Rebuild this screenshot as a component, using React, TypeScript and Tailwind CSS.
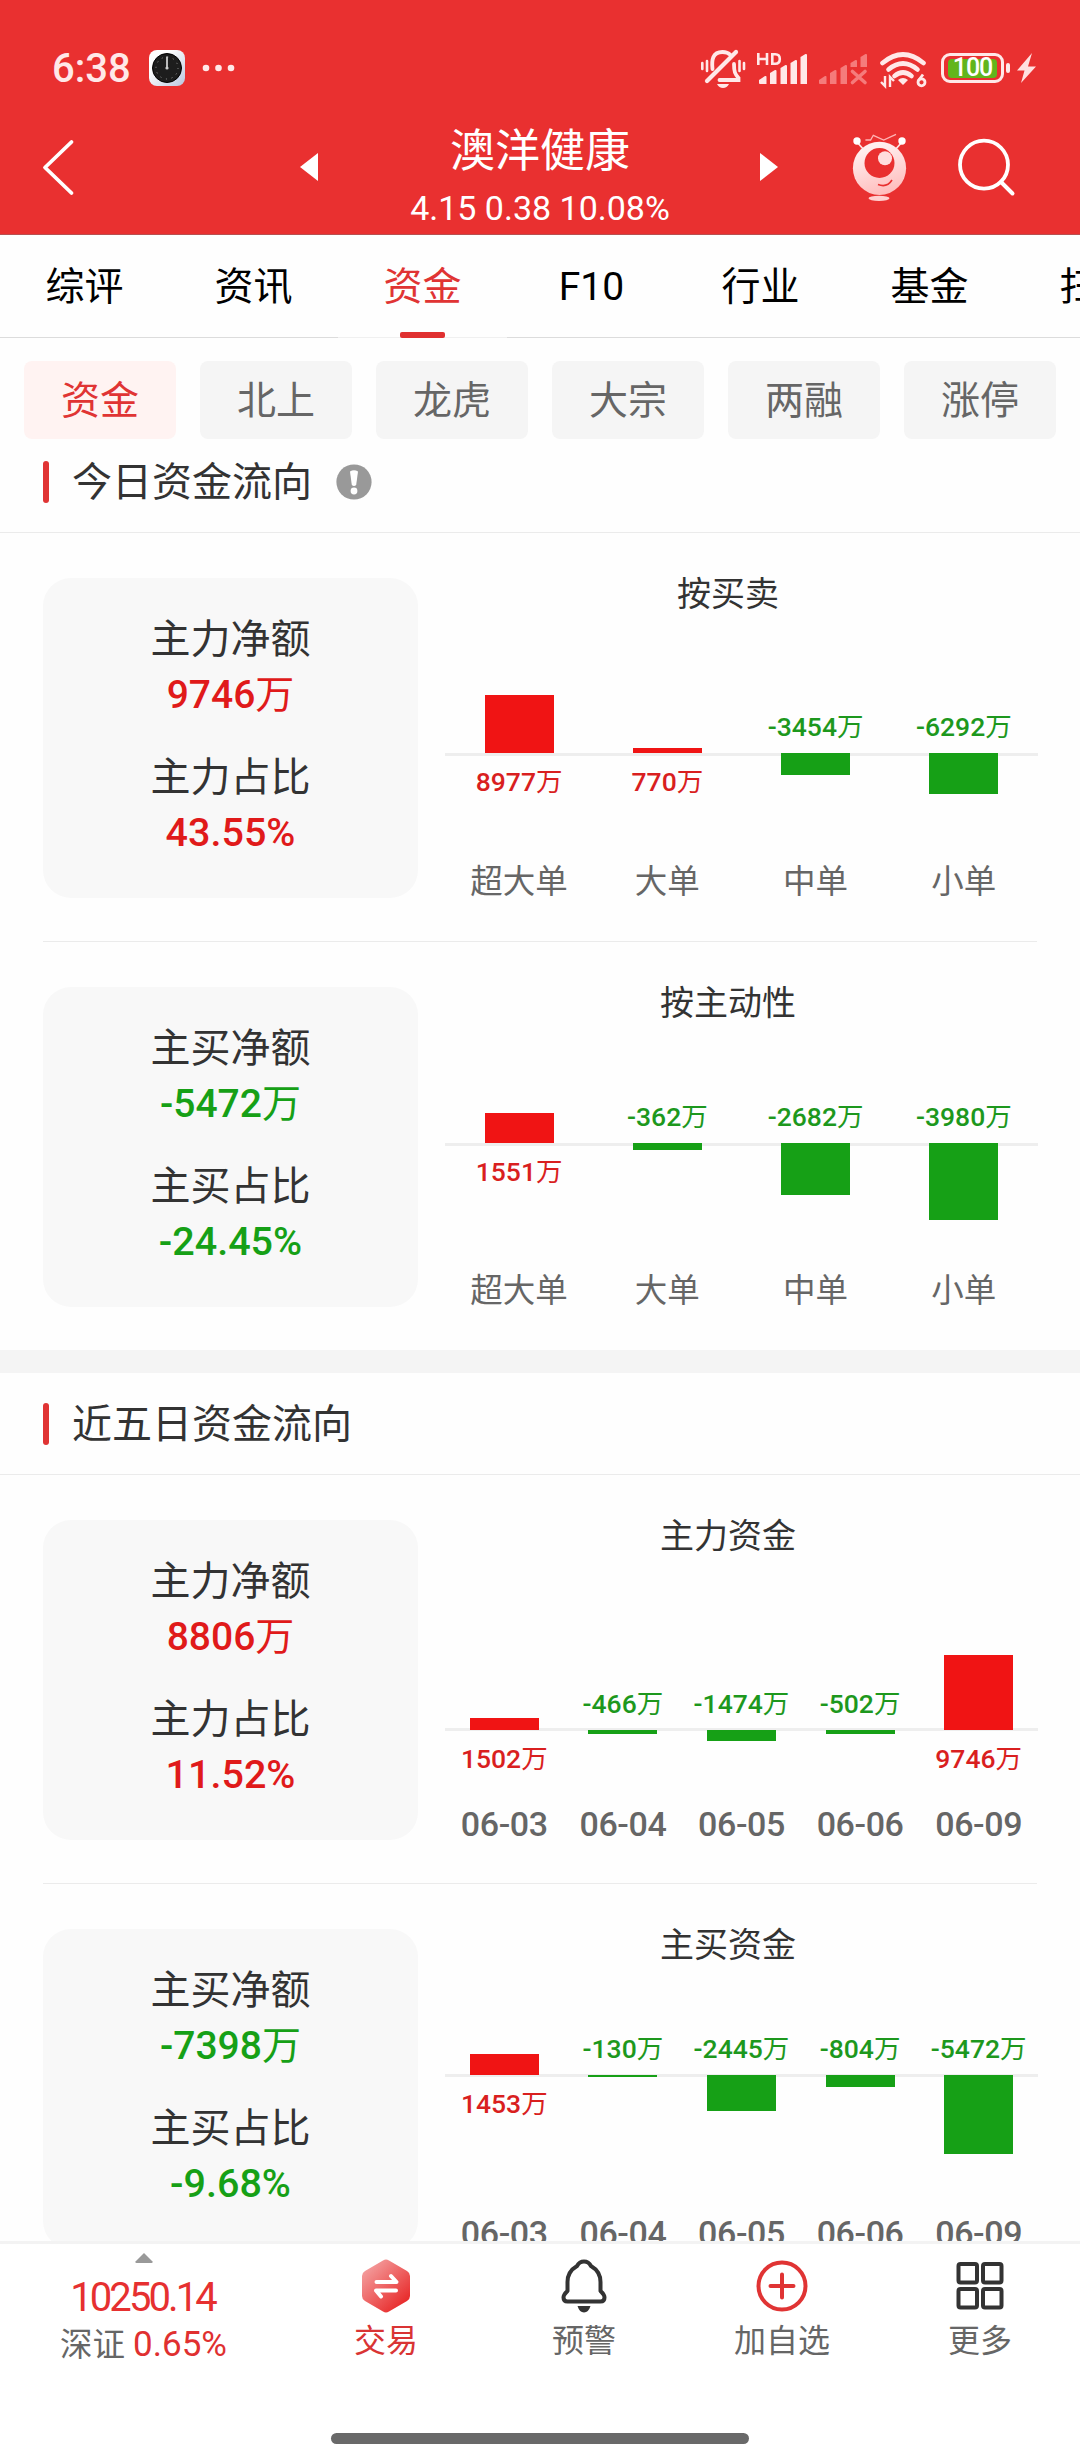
import React from "react";

const RED_BAR = "bg-[#f01414]";
const GREEN_BAR = "bg-[#16a016]";

type Bar = { value: string; label: string; size: number; up: boolean };

type BlockData = {
  netLabel: string;
  net: string;
  ratioLabel: string;
  ratio: string;
  positive: boolean;
  title: string;
  base: number;
  lineShift: number;
  bars: Bar[];
};

const TODAY: BlockData[] = [
  {
    netLabel: "主力净额",
    net: "9746万",
    ratioLabel: "主力占比",
    ratio: "43.55%",
    positive: true,
    title: "按买卖",
    base: 175,
    lineShift: 0,
    bars: [
      { value: "8977万", label: "超大单", size: 58, up: true },
      { value: "770万", label: "大单", size: 5, up: true },
      { value: "-3454万", label: "中单", size: 22, up: false },
      { value: "-6292万", label: "小单", size: 41, up: false },
    ],
  },
  {
    netLabel: "主买净额",
    net: "-5472万",
    ratioLabel: "主买占比",
    ratio: "-24.45%",
    positive: false,
    title: "按主动性",
    base: 156,
    lineShift: 0,
    bars: [
      { value: "1551万", label: "超大单", size: 30, up: true },
      { value: "-362万", label: "大单", size: 7, up: false },
      { value: "-2682万", label: "中单", size: 52, up: false },
      { value: "-3980万", label: "小单", size: 77, up: false },
    ],
  },
];

const FIVE_DAYS: BlockData[] = [
  {
    netLabel: "主力净额",
    net: "8806万",
    ratioLabel: "主力占比",
    ratio: "11.52%",
    positive: true,
    title: "主力资金",
    base: 210,
    lineShift: 2,
    bars: [
      { value: "1502万", label: "06-03", size: 12, up: true },
      { value: "-466万", label: "06-04", size: 4, up: false },
      { value: "-1474万", label: "06-05", size: 11, up: false },
      { value: "-502万", label: "06-06", size: 4, up: false },
      { value: "9746万", label: "06-09", size: 75, up: true },
    ],
  },
  {
    netLabel: "主买净额",
    net: "-7398万",
    ratioLabel: "主买占比",
    ratio: "-9.68%",
    positive: false,
    title: "主买资金",
    base: 146,
    lineShift: 1,
    bars: [
      { value: "1453万", label: "06-03", size: 21, up: true },
      { value: "-130万", label: "06-04", size: 2, up: false },
      { value: "-2445万", label: "06-05", size: 36, up: false },
      { value: "-804万", label: "06-06", size: 12, up: false },
      { value: "-5472万", label: "06-09", size: 79, up: false },
    ],
  },
];

function Value({ text, className }: { text: string; className: string }) {
  const hasUnit = text.endsWith("万");
  return (
    <span className={className}>
      {hasUnit ? text.slice(0, -1) : text}
      {hasUnit && <span className="font-normal">万</span>}
    </span>
  );
}

function Chart({ data }: { data: BlockData }) {
  const rest = 287 - data.base;
  return (
    <div className="relative h-[320px] w-[593px]">
      <div
        className="absolute left-0 h-[3px] w-full bg-[#eeeeee]"
        style={{ top: data.base - data.lineShift }}
      />
      <div className="absolute -top-[3px] left-0 w-[566px] text-center text-[34px] leading-[38px] text-[#333333]">
        {data.title}
      </div>
      <div className="relative flex h-full">
        {data.bars.map((b) => {
          const bar = (
            <div
              className={"w-[69px] shrink-0 " + (b.up ? RED_BAR : GREEN_BAR)}
              style={{ height: b.size }}
            />
          );
          const text = (
            <Value
              text={b.value}
              className={
                "mb-[11px] mt-[13px] whitespace-nowrap text-[26.5px] font-medium leading-[31px] " +
                (b.up ? "text-[#d91f1f]" : "text-[#1d981d]")
              }
            />
          );
          return (
            <div key={b.label} className="flex flex-1 flex-col items-center">
              <div
                className="flex shrink-0 flex-col items-center justify-end"
                style={{ height: data.base }}
              >
                {b.up ? bar : text}
              </div>
              <div
                className="flex shrink-0 flex-col items-center"
                style={{ height: rest }}
              >
                {b.up ? text : bar}
              </div>
              <div
                className={
                  "whitespace-nowrap leading-[34px] text-[#666666] " +
                  (b.label.includes("-")
                    ? "text-[34px] font-medium tracking-[-0.4px]"
                    : "text-[32.5px]")
                }
              >
                {b.label}
              </div>
            </div>
          );
        })}
      </div>
    </div>
  );
}

function Block({ data }: { data: BlockData }) {
  const color = data.positive ? "text-[#e01a1a]" : "text-[#16a016]";
  return (
    <div className="flex h-[408px] gap-[27px] pl-[43px] pt-[45px]">
      <div className="flex h-[320px] w-[375px] flex-col items-center rounded-[28px] bg-[#f8f8f8] pt-[34px] text-[40px] text-[#333333]">
        <div className="h-[55px] leading-[56px]">{data.netLabel}</div>
        <Value
          text={data.net}
          className={"h-[56px] text-[39px] font-medium leading-[56px] " + color}
        />
        <div className="mt-[27px] h-[55px] leading-[56px]">
          {data.ratioLabel}
        </div>
        <Value
          text={data.ratio}
          className={"h-[56px] text-[39.5px] font-medium leading-[56px] " + color}
        />
      </div>
      <Chart data={data} />
    </div>
  );
}

function SectionTitle({ text, info }: { text: string; info?: boolean }) {
  return (
    <div className="flex h-[102px] items-center border-b border-[#ebebeb] pl-[43px]">
      <div className="h-[42px] w-[6px] rounded-full bg-[#e03434]" />
      <div className="ml-[23px] pt-[2px] text-[40px] leading-[56px] text-[#333333]">
        {text}
      </div>
      {info && (
        <svg className="ml-6 h-[36px] w-[36px]" viewBox="0 0 36 36">
          <circle cx="18" cy="18" r="17.6" fill="#999" />
          <path d="M14 7.5q4-2.500 8 0l-1.800 13.500q-2.200 2-4.400 0z" fill="#fff" />
          <circle cx="18" cy="27" r="3.400" fill="#fff" />
        </svg>
      )}
    </div>
  );
}

function StatusBar() {
  return (
    <div className="flex h-[102px] items-start pl-[52px] pt-[48px] text-[#ffe8e8]">
      <div className="w-[97px] text-[40px] font-medium leading-[41px]">
        6:38
      </div>
      <svg className="h-[42px] w-[90px]" viewBox="149 48 90 42">
        <defs>
          <linearGradient id="clock" x1="0" y1="0" x2="1" y2="1">
            <stop offset="0.3" stopColor="#fff" />
            <stop offset="1" stopColor="#b9c6de" />
          </linearGradient>
        </defs>
        <rect x="149" y="50" width="36" height="36" rx="8" fill="url(#clock)" />
        <circle cx="167" cy="68" r="14.5" fill="#1d1d1d" stroke="#000" />
        <circle
          cx="167"
          cy="68"
          r="11"
          fill="none"
          stroke="#999"
          strokeWidth="1"
          strokeDasharray="1 4.76"
        />
        <path d="M167 56.500v12" stroke="#bbb" strokeWidth="2" />
        <circle cx="167" cy="68" r="1.600" fill="#ccc" />
        <circle cx="206" cy="68" r="3.300" fill="#ffe8e8" />
        <circle cx="218.500" cy="68" r="3.300" fill="#ffe8e8" />
        <circle cx="231" cy="68" r="3.300" fill="#ffe8e8" />
      </svg>
      <svg className="ml-[461px] h-[42px] w-[48px]" viewBox="700 48 48 42">
        <g fill="none" stroke="#ffe8e8" strokeLinecap="round">
          <path
            d="M712.500 69c-1-9 0-17 10-17 4 0 6 1 8 3"
            strokeWidth="3.800"
          />
          <path d="M736 52L707 81" strokeWidth="4.200" />
          <path d="M734 64c0 8 1 10 4.500 14v2h-19" strokeWidth="3.800" />
          <path d="M702.300 63v6M707 61v10M739.500 61v10M744 63v6" strokeWidth="2.600" />
        </g>
        <path d="M717 84h12q-2 4-6 4t-6-4z" fill="#ffe8e8" />
      </svg>
      <svg className="ml-[8px] h-[42px] w-[54px]" viewBox="756 48 54 42">
        <g fill="none" stroke="#ffe8e8" strokeWidth="2.600">
          <path d="M758.300 53v12M767 53v12M758.300 59h8.700" />
          <path d="M772.300 54.300h3q4.500 0 4.500 4.700t-4.500 4.700h-3z" />
        </g>
        <g fill="#ffe8e8">
          <path d="M759 80l6-4q1.500-.5 1.500 1v7H760q-1 0-1-1z" />
          <path d="M770 73l5-3q1.500-.3 1.500 1v13H770z" />
          <path d="M780.500 68l5-3q1.500-.3 1.500 1v18h-6.500z" />
          <path d="M790.500 63l5-3q1.500-.3 1.500 1v23h-6.500z" />
          <path d="M800.500 57l5-3q1.500-.3 1.500 1v29h-6.500z" />
        </g>
      </svg>
      <svg className="ml-[8px] h-[42px] w-[52px]" viewBox="818 48 52 42">
        <g fill="#f57b7b">
          <path d="M819 80l6-4q1.500-.5 1.500 1v7H820q-1 0-1-1z" />
          <path d="M830 73l5-3q1.500-.3 1.500 1v13H830z" />
          <path d="M840.500 68l5-3q1.500-.3 1.500 1v18h-6.500z" />
          <path d="M850.500 63l5-3q1.500-.3 1.500 1v6h-6.500z" />
          <path d="M860.500 57l5-3q1.500-.3 1.500 1v12h-6.500z" />
        </g>
        <path
          d="M852.500 71.500l12.500 11M865 71.500l-12.500 11"
          stroke="#f57b7b"
          strokeWidth="3.600"
          strokeLinecap="round"
        />
      </svg>
      <svg className="ml-[8px] h-[42px] w-[50px]" viewBox="878 48 50 42">
        <g fill="none" stroke="#ffe8e8" strokeWidth="4.600" strokeLinecap="round">
          <path d="M882.500 63q20.500-17 41 0" />
          <path d="M888.500 69.500q14.500-12 29 0" />
          <path d="M894.500 76q8.500-7 17 0" />
        </g>
        <path d="M898 80q5-4 10 0l-5 5z" fill="#ffe8e8" />
        <path
          d="M885 76v10l-4-4M890 87V77l4 4"
          fill="none"
          stroke="#ffe8e8"
          strokeWidth="2.400"
        />
        <g fill="none" stroke="#ffe8e8" strokeWidth="2.800">
          <circle cx="921.500" cy="82.300" r="3.500" />
          <path d="M923 74.500l-4.500 6" />
        </g>
      </svg>
      <div className="ml-[13px] mt-[5px] flex h-[30px] items-center">
        <div className="flex h-[30px] w-[63px] items-center justify-center rounded-[9px] border-[3px] border-[#ffe8e8]">
          <div className="flex h-[19px] w-[49px] items-center justify-center rounded-[4px] bg-[#62b51c] text-[25px] font-medium leading-[20px] tracking-[-1px] text-white">
            100
          </div>
        </div>
        <div className="ml-[2px] h-[10px] w-[4px] rounded-[2px] bg-[#ffe8e8]" />
        <svg className="ml-[6px] h-[32px] w-[22px]" viewBox="1016 52 22 32">
          <path d="M1032 53l-15 17.500h7.500L1021 83l15-16.500h-8z" fill="#ffe0e0" />
        </svg>
      </div>
    </div>
  );
}

function Header() {
  return (
    <header className="h-[235px] border-b border-[#b85050] bg-[#e93030]">
      <StatusBar />
      <div className="flex h-[132px] items-start">
        <svg className="ml-[40px] mt-[36px] h-[58px] w-[38px]" viewBox="40 138 38 58">
          <path
            d="M71.500 142L45 167.500 71.500 193"
            fill="none"
            stroke="#fff"
            strokeWidth="3.800"
            strokeLinecap="round"
            strokeLinejoin="round"
          />
        </svg>
        <svg className="ml-[221px] mt-[50px] h-[30px] w-[20px]" viewBox="0 0 20 30">
          <path d="M1 15L19 1v28z" fill="#fff" />
        </svg>
        <div className="w-[440px] pt-[20px] text-center text-white">
          <div className="ml-[2px] text-[45px] leading-[60px]">澳洋健康</div>
          <div className="ml-[2px] mt-[1px] text-[34px] leading-[50px]">
            4.15 0.38 10.08%
          </div>
        </div>
        <svg className="mt-[50px] h-[30px] w-[20px]" viewBox="0 0 20 30">
          <path d="M19 15L1 1v28z" fill="#fff" />
        </svg>
        <svg className="ml-[71px] mt-[28px] h-[76px] w-[60px]" viewBox="850 130 60 76">
          <defs>
            <linearGradient id="bot" x1="0.3" y1="0" x2="0.6" y2="1">
              <stop offset="0.1" stopColor="#fff0f0" />
              <stop offset="1" stopColor="#ffbcbc" />
            </linearGradient>
          </defs>
          <path
            d="M857 142l7 8M902 142l-7 8"
            stroke="#ffe4e4"
            strokeWidth="1.800"
          />
          <path
            d="M865.400 140h5.200l2.700-4.700 10.400 4.700 12.300-5.700"
            fill="none"
            stroke="#ffb4b4"
            strokeWidth="1.300"
          />
          <circle cx="857" cy="141" r="3.700" fill="#fff" />
          <circle cx="902" cy="141" r="3.700" fill="#fff" />
          <circle cx="879.500" cy="168.300" r="26.600" fill="url(#bot)" />
          <circle cx="879.500" cy="163" r="15" fill="#e93030" />
          <circle cx="885" cy="158.300" r="7" fill="#ffdede" />
          <path
            d="M878 184.500q9 3.500 14-4.500"
            fill="none"
            stroke="#e93030"
            strokeWidth="1.600"
          />
          <ellipse cx="879" cy="198.300" rx="10.500" ry="2.600" fill="#ffd0d0" />
        </svg>
        <svg className="ml-[46px] mt-[34px] h-[62px] w-[62px]" viewBox="956 136 62 62">
          <circle
            cx="984"
            cy="164.700"
            r="24"
            fill="none"
            stroke="#fff"
            strokeWidth="3.800"
          />
          <path
            d="M1001 182l11.500 11.500"
            stroke="#fff"
            strokeWidth="4"
            strokeLinecap="round"
          />
        </svg>
      </div>
    </header>
  );
}

const TABS = ["综评", "资讯", "资金", "F10", "行业", "基金", "扫雷"];
const CHIPS = ["资金", "北上", "龙虎", "大宗", "两融", "涨停"];

function Tabs() {
  return (
    <nav className="flex h-[103px] w-full overflow-hidden">
      {TABS.map((t) => {
        const active = t === "资金";
        return (
          <div
            key={t}
            className={
              "relative h-[103px] w-[169px] shrink-0 border-b pt-[2px] text-center text-[39px] leading-[101px] " +
              (active
                ? "border-[#f0f0f0] text-[#e03434]"
                : "border-[#dcdcdc] text-black")
            }
          >
            {t}
            {active && (
              <div className="absolute -bottom-px left-[62px] h-[6px] w-[45px] rounded-[2px] bg-[#e03030]" />
            )}
          </div>
        );
      })}
    </nav>
  );
}

function Chips() {
  return (
    <div className="flex gap-6 px-6 pt-[23px]">
      {CHIPS.map((c, i) => (
        <div
          key={c}
          className={
            "h-[78px] w-[152px] shrink-0 rounded-[8px] text-center text-[39px] leading-[80px] " +
            (i === 0
              ? "bg-[#fff3f2] text-[#e03434]"
              : "bg-[#f5f5f5] text-[#666666]")
          }
        >
          {c}
        </div>
      ))}
    </div>
  );
}

function Action({
  label,
  red,
  children,
}: {
  label: string;
  red?: boolean;
  children: React.ReactNode;
}) {
  return (
    <div className="flex w-[198px] shrink-0 flex-col items-center pt-[13px]">
      <svg className="h-[58px] w-[58px]" viewBox="0 0 58 58">
        {children}
      </svg>
      <div
        className={
          "mt-[4px] text-[32px] leading-[44px] " +
          (red ? "text-[#d93434]" : "text-[#666666]")
        }
      >
        {label}
      </div>
    </div>
  );
}

function BottomBar() {
  return (
    <footer className="h-[219px] border-t-[3px] border-[#f3f3f3] bg-white">
      <div className="flex h-[189px]">
        <div className="flex w-[287px] flex-col items-center pt-[8px]">
          <svg className="h-[12px] w-[20px]" viewBox="0 0 20 12">
            <path
              d="M10 1L1.500 9.500q-.5 1.500 1 1.500h15q1.500 0 1-1.500z"
              fill="#999"
            />
          </svg>
          <div className="mr-[2px] mt-[10px] text-[40px] leading-[48px] tracking-[-2.900px] text-[#e63030]">
            10250.14
          </div>
          <div className="mt-px text-[32.500px] leading-[44px] text-[#666666]">
            深证{" "}
            <span className="text-[35px] text-[#e03030]">0.65%</span>
          </div>
        </div>
        <Action label="交易" red>
          <defs>
            <linearGradient id="hex" x1="0.1" y1="0.1" x2="0.8" y2="0.9">
              <stop offset="0" stopColor="#f4a0a0" />
              <stop offset="1" stopColor="#e82c2c" />
            </linearGradient>
          </defs>
          <path
            d="M26 3.500q3-1.800 6 0l18 10.500q3 1.800 3 5v20q0 3.200-3 5L32 54.500q-3 1.800-6 0L8 44q-3-1.800-3-5V19q0-3.200 3-5z"
            fill="url(#hex)"
          />
          <path
            d="M19.500 25h20l-5.500-6M39 33.500H19l5 6"
            fill="none"
            stroke="#fff"
            strokeWidth="4"
            strokeLinecap="round"
            strokeLinejoin="round"
          />
        </Action>
        <Action label="预警">
          <path
            d="M29 4.500c-4 0-5.500 1.500-7 4.500-6 3.500-9.500 9-9.500 16v9c-2 2-4 3.500-4 6.500 0 3 1.500 4 4 4h33c2.500 0 4-1 4-4 0-3-2-4.500-4-6.500v-9c0-7-3.500-12.500-9.500-16-1.500-3-3-4.500-7-4.500z"
            fill="none"
            stroke="#333"
            strokeWidth="4"
            strokeLinejoin="round"
          />
          <path d="M22.500 49h13q-2 6.500-6.500 6.500T22.500 49z" fill="#333" />
        </Action>
        <Action label="加自选">
          <g fill="none" stroke="#e03434" strokeWidth="4" strokeLinecap="round">
            <circle cx="29" cy="29" r="23.500" />
            <path d="M17.500 29h23M29 17.500v23" />
          </g>
        </Action>
        <Action label="更多">
          <g fill="none" stroke="#333" strokeWidth="4">
            <rect x="7.500" y="7" width="18.500" height="18.500" rx="2" />
            <rect x="32" y="7" width="18.500" height="18.500" rx="2" />
            <rect x="7.500" y="32" width="18.500" height="18.500" rx="2" />
            <rect x="32" y="32" width="18.500" height="18.500" rx="2" />
          </g>
        </Action>
      </div>
      <div className="mx-auto h-[11px] w-[418px] rounded-full bg-[#696969]" />
    </footer>
  );
}

export default function App() {
  return (
    <div className="h-[2460px] w-[1080px] overflow-hidden bg-[#fefefe] font-[Roboto,'Noto_Sans_CJK_SC',sans-serif]">
      <Header />
      <Tabs />
      <Chips />
      <main className="h-[1802px] overflow-hidden">
        <div className="-mt-[8px]">
          <SectionTitle text="今日资金流向" info />
          <Block data={TODAY[0]} />
          <div className="ml-[43px] h-px w-[994px] bg-[#ebebeb]" />
          <Block data={TODAY[1]} />
          <div className="h-[23px] bg-[#f4f4f4]" />
          <SectionTitle text="近五日资金流向" />
          <Block data={FIVE_DAYS[0]} />
          <div className="ml-[43px] h-px w-[994px] bg-[#ebebeb]" />
          <Block data={FIVE_DAYS[1]} />
        </div>
      </main>
      <BottomBar />
    </div>
  );
}
